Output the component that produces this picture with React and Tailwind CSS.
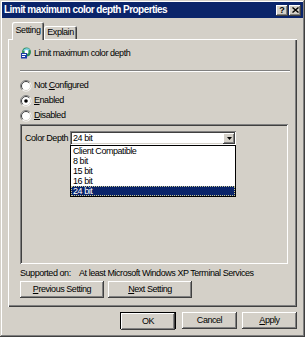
import React from "react";

const raised =
  "bg-[#d4d0c8] shadow-[inset_-1px_-1px_0_#404040,inset_1px_1px_0_#ffffff,inset_-2px_-2px_0_#808080,inset_2px_2px_0_#d4d0c8]";

function Radio({ checked }) {
  return (
    <svg width="12" height="12" viewBox="0 0 12 12" className="shrink-0">
      <circle cx="6" cy="6" r="5.5" fill="#ffffff" />
      <path d="M2.1 9.9 A5.5 5.5 0 0 1 9.9 2.1" fill="none" stroke="#808080" />
      <path d="M2.8 9.2 A4.5 4.5 0 0 1 9.2 2.8" fill="none" stroke="#404040" />
      <path d="M9.2 2.8 A4.5 4.5 0 0 1 2.8 9.2" fill="none" stroke="#d4d0c8" />
      {checked && <circle cx="6" cy="6" r="1.8" fill="#000000" />}
    </svg>
  );
}

function PolicyIcon() {
  return (
    <svg width="12" height="12" viewBox="0 0 12 12" className="shrink-0">
      <circle cx="6.5" cy="5" r="4.5" fill="#2f8f5a" />
      <path d="M3 3.5 A4.5 4.5 0 0 1 10 2.5 L7 5 Z" fill="#7fd0e8" />
      <circle cx="6.5" cy="5" r="2" fill="#ffffff" />
      <rect x="1" y="6" width="6" height="5.5" fill="#1c3aa8" />
      <rect x="2" y="7" width="4" height="1" fill="#ffffff" />
      <rect x="2" y="9" width="3" height="1" fill="#ffffff" />
    </svg>
  );
}

function Button({ children, className = "" }) {
  return (
    <div
      className={`h-[17px] flex items-center justify-center bg-[#d4d0c8] shadow-[inset_-1px_-1px_0_#404040,inset_1px_1px_0_#ffffff,inset_-2px_-2px_0_#808080,inset_2px_2px_0_#d4d0c8] ${className}`}
    >
      {children}
    </div>
  );
}

export default function App() {
  return (
    <div className="w-[308px] h-[338px] bg-white font-['Liberation_Sans',Arial,sans-serif] text-[9px] text-black tracking-[-0.45px] leading-none whitespace-nowrap">
      <div className="w-[305px] h-[337px] bg-[#d4d0c8] p-[2px] flex flex-col shadow-[inset_-1px_-1px_0_#404040,inset_1px_1px_0_#d4d0c8,inset_-2px_-2px_0_#808080,inset_2px_2px_0_#ffffff]">
        {/* Title bar */}
        <div className="h-[16px] bg-[#0a246a] flex items-center pl-[2px] pr-[2px]">
          <span className="flex-1 text-white font-bold text-[10px] tracking-[-0.55px]">
            Limit maximum color depth Properties
          </span>
          <div className={`w-[12px] h-[11px] flex items-center justify-center font-bold text-[9px] tracking-normal ${raised}`}>
            ?
          </div>
          <div className={`ml-[1px] w-[12px] h-[11px] flex items-center justify-center ${raised}`}>
            <svg width="7" height="6" viewBox="0 0 7 6">
              <path d="M0.5 0.5 L6.5 5.5 M6.5 0.5 L0.5 5.5" stroke="#000" strokeWidth="1.4" />
            </svg>
          </div>
        </div>

        <div className="flex flex-col px-[6px]">
          {/* Tabs */}
          <div className="mt-[4px] h-[17px] pl-[4px] flex items-end relative z-10">
            <div className="w-[32px] h-[18px] -mb-[1px] bg-[#d4d0c8] rounded-t-[2px] flex items-center justify-center pb-[1px] shadow-[inset_1px_1px_0_#ffffff,inset_-1px_0_0_#404040,inset_-2px_0_0_#808080]">
              Setting
            </div>
            <div className="w-[33px] h-[13px] bg-[#d4d0c8] rounded-t-[2px] flex items-center justify-center shadow-[inset_1px_1px_0_#ffffff,inset_-1px_0_0_#404040,inset_-2px_0_0_#808080]">
              Explain
            </div>
          </div>

          {/* Tab panel */}
          <div className="h-[268px] pl-[12px] pr-[9px] pt-[8px] flex flex-col shadow-[inset_1px_1px_0_#ffffff,inset_-1px_-1px_0_#404040,inset_-2px_-2px_0_#808080]">
            <div className="h-[12px] flex items-center gap-[2px]">
              <PolicyIcon />
              <span>Limit maximum color depth</span>
            </div>

            <div className="mt-[11px] mr-[-2px] h-[2px] border-t border-[#808080] border-b border-b-white" />

            <div className="mt-[6px] flex flex-col">
              <div className="h-[15px] flex items-center gap-[2px]">
                <Radio />
                <span>
                  Not <u>C</u>onfigured
                </span>
              </div>
              <div className="h-[15px] flex items-center gap-[2px]">
                <Radio checked />
                <span>
                  <u>E</u>nabled
                </span>
              </div>
              <div className="h-[15px] flex items-center gap-[2px]">
                <Radio />
                <span>
                  <u>D</u>isabled
                </span>
              </div>
            </div>

            {/* Options box */}
            <div className="mt-[1px] h-[140px] relative pt-[7px] pl-[5px] shadow-[inset_1px_1px_0_#808080,inset_-1px_-1px_0_#ffffff,inset_2px_2px_0_#404040,inset_-2px_-2px_0_#d4d0c8]">
              <div className="flex items-center">
                <span className="w-[45px]">Color Depth</span>
                <div className="w-[166px] h-[14px] bg-white flex items-center pl-[3px] pr-[1px] shadow-[inset_1px_1px_0_#808080,inset_-1px_-1px_0_#ffffff,inset_2px_2px_0_#404040,inset_-2px_-2px_0_#d4d0c8]">
                  <span className="flex-1">24 bit</span>
                  <div className={`w-[12px] h-[11px] flex items-center justify-center ${raised}`}>
                    <svg width="5" height="3" viewBox="0 0 5 3">
                      <path d="M0 0 H5 L2.5 3 Z" fill="#000" />
                    </svg>
                  </div>
                </div>
              </div>

              {/* Open list */}
              <div className="absolute top-[21px] left-[50px] w-[166px] bg-white border border-black flex flex-col">
                <div className="h-[10px] flex items-center pl-[2px]">Client Compatible</div>
                <div className="h-[10px] flex items-center pl-[2px]">8 bit</div>
                <div className="h-[10px] flex items-center pl-[2px]">15 bit</div>
                <div className="h-[10px] flex items-center pl-[2px]">16 bit</div>
                <div className="h-[10px] flex items-center pl-[2px] bg-[#0a246a] text-white outline outline-1 outline-dotted outline-[#c8c890] -outline-offset-1">
                  24 bit
                </div>
              </div>
            </div>

            <div className="mt-[5px] h-[9px] flex items-center">
              <span className="w-[59px]">Supported on:</span>
              <span>At least Microsoft Windows XP Terminal Services</span>
            </div>

            <div className="mt-[3px] flex gap-[4px]">
              <Button className="w-[84px]">
                <span>
                  <u>P</u>revious Setting
                </span>
              </Button>
              <Button className="w-[84px]">
                <span>
                  <u>N</u>ext Setting
                </span>
              </Button>
            </div>
          </div>

          {/* Dialog buttons */}
          <div className="mt-[5px] flex justify-end">
            <div className="w-[56px] h-[17px] border border-black">
              <Button className="h-[15px] w-full">OK</Button>
            </div>
            <Button className="ml-[6px] w-[55px]">Cancel</Button>
            <Button className="ml-[5px] w-[55px]">
              <span>
                <u>A</u>pply
              </span>
            </Button>
          </div>
        </div>
      </div>
    </div>
  );
}
